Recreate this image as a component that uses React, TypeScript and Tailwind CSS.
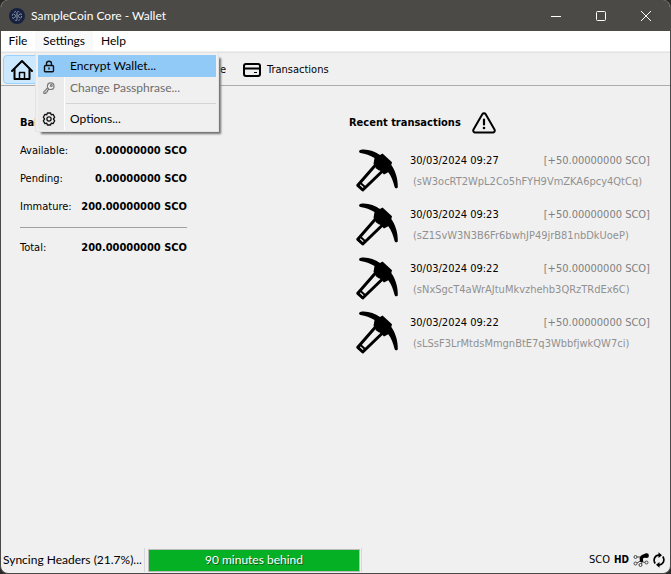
import type { ReactNode } from "react";

const UI = "font-['Lato','Open_Sans',sans-serif]";
const BODY = "font-['DejaVu_Sans_Condensed','Noto_Sans',sans-serif]";

const balances = [
  { label: "Available:", amount: "0.00000000 SCO" },
  { label: "Pending:", amount: "0.00000000 SCO" },
  { label: "Immature:", amount: "200.00000000 SCO" },
];

const transactions = [
  { date: "30/03/2024 09:27", address: "(sW3ocRT2WpL2Co5hFYH9VmZKA6pcy4QtCq)" },
  { date: "30/03/2024 09:23", address: "(sZ1SvW3N3B6Fr6bwhJP49jrB81nbDkUoeP)" },
  { date: "30/03/2024 09:22", address: "(sNxSgcT4aWrAJtuMkvzhehb3QRzTRdEx6C)" },
  { date: "30/03/2024 09:22", address: "(sLSsF3LrMtdsMmgnBtE7q3WbbfjwkQW7ci)" },
];

function CoinLogo() {
  return (
    <svg viewBox="0 0 16 16" className="size-4" aria-hidden="true">
      <circle cx="8" cy="8" r="8" fill="#15213f" />
      <g fill="none" stroke="#8793aa" strokeWidth="1">
        <circle cx="8" cy="8" r="1.3" />
        <circle cx="8" cy="8" r="4.6" strokeDasharray="2 1.6" />
        <path d="M8 4v2M8 10v2M4.500 6l2 1.200M9.500 8.800l2 1.200M4.500 10l2-1.200M9.500 7.200l2-1.200" />
      </g>
    </svg>
  );
}

function HomeIcon() {
  return (
    <svg viewBox="0 0 24 22" className="h-[22px] w-6 shrink-0" fill="none" stroke="#000" strokeWidth="2" strokeLinejoin="round" strokeLinecap="round" aria-hidden="true">
      <path d="M2 12 12 2l10 10" />
      <path d="M4.500 10.500V20h15v-9.500" />
      <path d="M9.500 20v-6.500h5V20" strokeWidth="1.500" />
    </svg>
  );
}

function CardIcon() {
  return (
    <svg viewBox="0 0 18 14" className="h-[14px] w-[18px]" fill="none" stroke="#000" aria-hidden="true">
      <rect x="1" y="1" width="16" height="12" rx="2" strokeWidth="2" />
      <path d="M1 5.500h16" strokeWidth="2" />
      <path d="M11 9.500h3" strokeWidth="1" />
    </svg>
  );
}

function LockIcon() {
  return (
    <svg viewBox="0 0 12 13" className="h-[13px] w-3" fill="none" stroke="#111" strokeWidth="1.400" aria-hidden="true">
      <rect x="1.500" y="5.500" width="9" height="6.300" rx="1" />
      <path d="M3.500 5.500V3.700a2.500 2.500 0 0 1 5 0v1.800M6 7.500v2" />
    </svg>
  );
}

function KeyIcon() {
  return (
    <svg viewBox="0 0 12 12" className="size-3" fill="none" stroke="#7b7b7b" strokeWidth="1.200" strokeLinejoin="round" aria-hidden="true">
      <circle cx="7.700" cy="4.200" r="3.300" />
      <circle cx="8.300" cy="3.600" r=".9" />
      <path d="M5 5.500.8 9.800v1.500h2l.2-1.300 1.300-.2.200-1.300 1.700-1.200" />
    </svg>
  );
}

function GearIcon() {
  return (
    <svg viewBox="0 0 14 14" className="size-[14px]" fill="none" stroke="#111" strokeWidth="1.300" strokeLinejoin="round" aria-hidden="true">
      <path d="M5.400 1h3.200l.6 1.800 1.900-.4 1.600 2.800L11.400 7l1.300 1.800-1.600 2.800-1.900-.4-.6 1.800H5.400l-.6-1.800-1.900.4-1.600-2.800L2.600 7 1.300 5.200l1.600-2.800 1.900.4z" />
      <circle cx="7" cy="7" r="2.100" />
    </svg>
  );
}

function WarningIcon() {
  return (
    <svg viewBox="0 0 24 22" className="h-[22px] w-6" aria-hidden="true">
      <path d="M10.300 2.300a2 2 0 0 1 3.400 0l8.800 15.300a2 2 0 0 1-1.700 3H3.200a2 2 0 0 1-1.700-3z" fill="none" stroke="#000" strokeWidth="2" />
      <path d="M12 7.500v5" stroke="#000" strokeWidth="2.200" strokeLinecap="round" />
      <circle cx="12" cy="16" r="1.300" />
    </svg>
  );
}

function PickaxeIcon() {
  return (
    <svg viewBox="0 0 44 44" className="size-11 shrink-0" aria-hidden="true">
      <path d="M6 1.700C13 .9 19.500 3.300 25 7l2.500-1.500L37 14.300l-.7 2.700c4.200 6 6.700 14 6.500 22 0 1.700-2.700 1.900-3.200.1C38 33 36.500 28.500 33.300 24.200L29 26.500 18.500 16 19.500 10C15 7.200 10.500 5.700 5.500 4.900c-2-.4-1.700-3 .5-3.200z" />
      <path d="M20.500 17 2.800 37.300 7.800 42 27.500 23" fill="none" stroke="#000" strokeWidth="3" strokeLinejoin="round" />
      <path d="m21 16-.5 4 3.500 2.500 3-.5z" />
      <path d="m5 34.500 5.500 5" stroke="#000" strokeWidth="2" />
    </svg>
  );
}

function PeersIcon() {
  return (
    <svg viewBox="0 0 16 14" className="h-[14px] w-4" aria-hidden="true">
      <g fill="none" stroke="#444" strokeWidth="1">
        <circle cx="2.500" cy="4" r="1.500" />
        <circle cx="2.500" cy="10.500" r="1.500" />
        <circle cx="7.500" cy="12" r="1.500" />
        <circle cx="13.500" cy="9.500" r="1.500" />
        <path d="M4 4h4M4 10l4-2.500M8.500 11l1-3M12 9.500l-3-1" />
      </g>
      <path d="M8.500 7.500C7.500 4.500 9.500 3 13 2.500" fill="none" stroke="#000" strokeWidth="3.400" strokeLinecap="round" />
      <circle cx="13.500" cy="2.700" r="2.400" />
    </svg>
  );
}

function SyncIcon() {
  return (
    <svg viewBox="0 0 12 16" className="h-4 w-3" fill="none" stroke="#000" strokeWidth="1.700" aria-hidden="true">
      <path d="M2.200 11.500C-.3 7.500 2 3.200 6 3.200M9.800 4.500C12.300 8.500 10 12.800 6 12.800" />
      <path d="M5.500.3 9 3.200 5.500 6.100zM6.500 9.900 3 12.800l3.500 2.900z" fill="#000" stroke="none" />
    </svg>
  );
}

function MenuItem({ icon, label, className = "", disabled = false }: { icon: ReactNode; label: string; className?: string; disabled?: boolean }) {
  return (
    <button type="button" role="menuitem" disabled={disabled} className={`flex h-[22px] w-full items-center text-left ${className}`}>
      <span className="flex w-[22px] justify-center">{icon}</span>
      <span className="pl-[10px]">{label}</span>
    </button>
  );
}

export default function App() {
  return (
    <div className="min-h-screen bg-[#292928]">
      <div className={`flex min-h-screen flex-col overflow-hidden rounded-lg border border-t-0 border-[#4b4a47] bg-[#f0f0f0] text-[12px] leading-4 text-black ${UI}`}>
        <header className="flex h-[31px] shrink-0 items-center bg-[#4b4a47] pr-[2px] pl-2 text-white">
          <CoinLogo />
          <h1 className="ml-[6px] flex-1">SampleCoin Core - Wallet</h1>
          <button type="button" aria-label="Minimize" className="flex h-full w-[45px] items-center justify-center">
            <svg viewBox="0 0 10 10" className="size-[10px]" stroke="#fff"><path d="M0 5.500h10" /></svg>
          </button>
          <button type="button" aria-label="Maximize" className="flex h-full w-[45px] items-center justify-center">
            <svg viewBox="0 0 10 10" className="size-[10px]" fill="none" stroke="#fff"><rect x=".5" y=".5" width="9" height="9" rx="1" /></svg>
          </button>
          <button type="button" aria-label="Close" className="flex h-full w-[45px] items-center justify-center">
            <svg viewBox="0 0 10 10" className="size-[10px]" stroke="#fff"><path d="m0 0 10 10M10 0 0 10" /></svg>
          </button>
        </header>

        <nav className="flex h-5 shrink-0 bg-white">
          <button type="button" className="w-[34px]">File</button>
          <div className="relative w-[58px]">
            <button type="button" aria-haspopup="menu" aria-expanded="true" className="h-full w-full bg-[#f9f9f9]">Settings</button>
            <div role="menu" className="absolute top-[21px] left-0 z-10 w-[184px] border border-[#e3e3e3] bg-[#f0f0f0] p-[2px] pb-px shadow-[4px_4px_2px_-2px_#707070]">
              <div className="bg-[linear-gradient(to_right,#ebebeb_26px,#fff_26px,#fff_27px,#f0f0f0_27px)]">
                <MenuItem icon={<LockIcon />} label="Encrypt Wallet..." className="bg-[#91c9f7]" />
                <MenuItem icon={<KeyIcon />} label="Change Passphrase..." className="text-[#6d6d6d]" disabled />
                <div className="h-[9px] pt-1 pl-7"><hr className="border-[#d4d4d4]" /></div>
                <MenuItem icon={<GearIcon />} label="Options..." />
              </div>
            </div>
          </div>
          <button type="button" className="w-[41px]">Help</button>
        </nav>

        <div className={`mt-px flex h-[34px] shrink-0 items-center border-t border-b border-t-[#e2e2e2] border-b-[#acacac] pt-px pl-[2px] text-[11px] ${BODY}`}>
          <button type="button" aria-label="Overview" className="flex h-[29px] w-[84px] items-center rounded-sm border border-[#99d1ff] bg-[#cce8ff] pl-[6px]">
            <HomeIcon />
          </button>
          <button type="button" aria-label="Send" className="h-[29px] w-[60px]" />
          <button type="button" className="w-[79px] text-right">Receive</button>
          <button type="button" className="ml-[17px] flex items-center gap-[6px]">
            <CardIcon />
            Transactions
          </button>
        </div>

        <main className={`flex flex-1 justify-between pt-[27px] pr-[20px] pl-[19px] text-[11px] ${BODY}`}>
          <section className="w-[167px]">
            <h2 className="mb-[10px] leading-5 font-bold">Balances</h2>
            <dl>
              {balances.map((row) => (
                <div key={row.label} className="flex h-[28px] justify-between">
                  <dt>{row.label}</dt>
                  <dd className="font-bold">{row.amount}</dd>
                </div>
              ))}
              <div className="flex justify-between border-t border-[#a0a0a0] pt-3">
                <dt>Total:</dt>
                <dd className="font-bold">200.00000000 SCO</dd>
              </div>
            </dl>
          </section>

          <section className="w-[301px]">
            <div className="flex h-5 items-center gap-[11px]">
              <h2 className="font-bold">Recent transactions</h2>
              <WarningIcon />
            </div>
            <ul className="mt-[15px]">
              {transactions.map((tx) => (
                <li key={tx.address} className="flex h-[54px] gap-[11px] pl-[6px]">
                  <PickaxeIcon />
                  <div className="flex-1 pt-[5px]">
                    <div className="flex h-[21px] justify-between">
                      <time>{tx.date}</time>
                      <span className="text-[#808080]">[+50.00000000 SCO]</span>
                    </div>
                    <p className="pl-[3px] text-[#909090]">{tx.address}</p>
                  </div>
                </li>
              ))}
            </ul>
          </section>
        </main>

        <footer className="flex h-[26px] shrink-0 items-center pl-[2px]">
          <span className="h-6 w-[142px] border-r border-[#d7d7d7] leading-6 whitespace-nowrap">Syncing Headers (21.7%)...</span>
          <div role="progressbar" aria-valuenow={22} aria-label="Sync progress" className="ml-[3px] h-[23px] w-[212px] border border-[#bcbcbc] bg-[#06b025] text-center leading-5 text-white [text-shadow:1px_1px_0_#155c20]">
            90 minutes behind
          </div>
          <div className="ml-px h-6 border-l border-[#d7d7d7]" />
          <div className={`ml-auto flex items-center gap-1 pr-[5px] ${BODY}`}>
            <span className="text-[11px]">SCO</span>
            <span className="text-[10px] font-bold">HD</span>
            <PeersIcon />
            <SyncIcon />
          </div>
        </footer>
      </div>
    </div>
  );
}
